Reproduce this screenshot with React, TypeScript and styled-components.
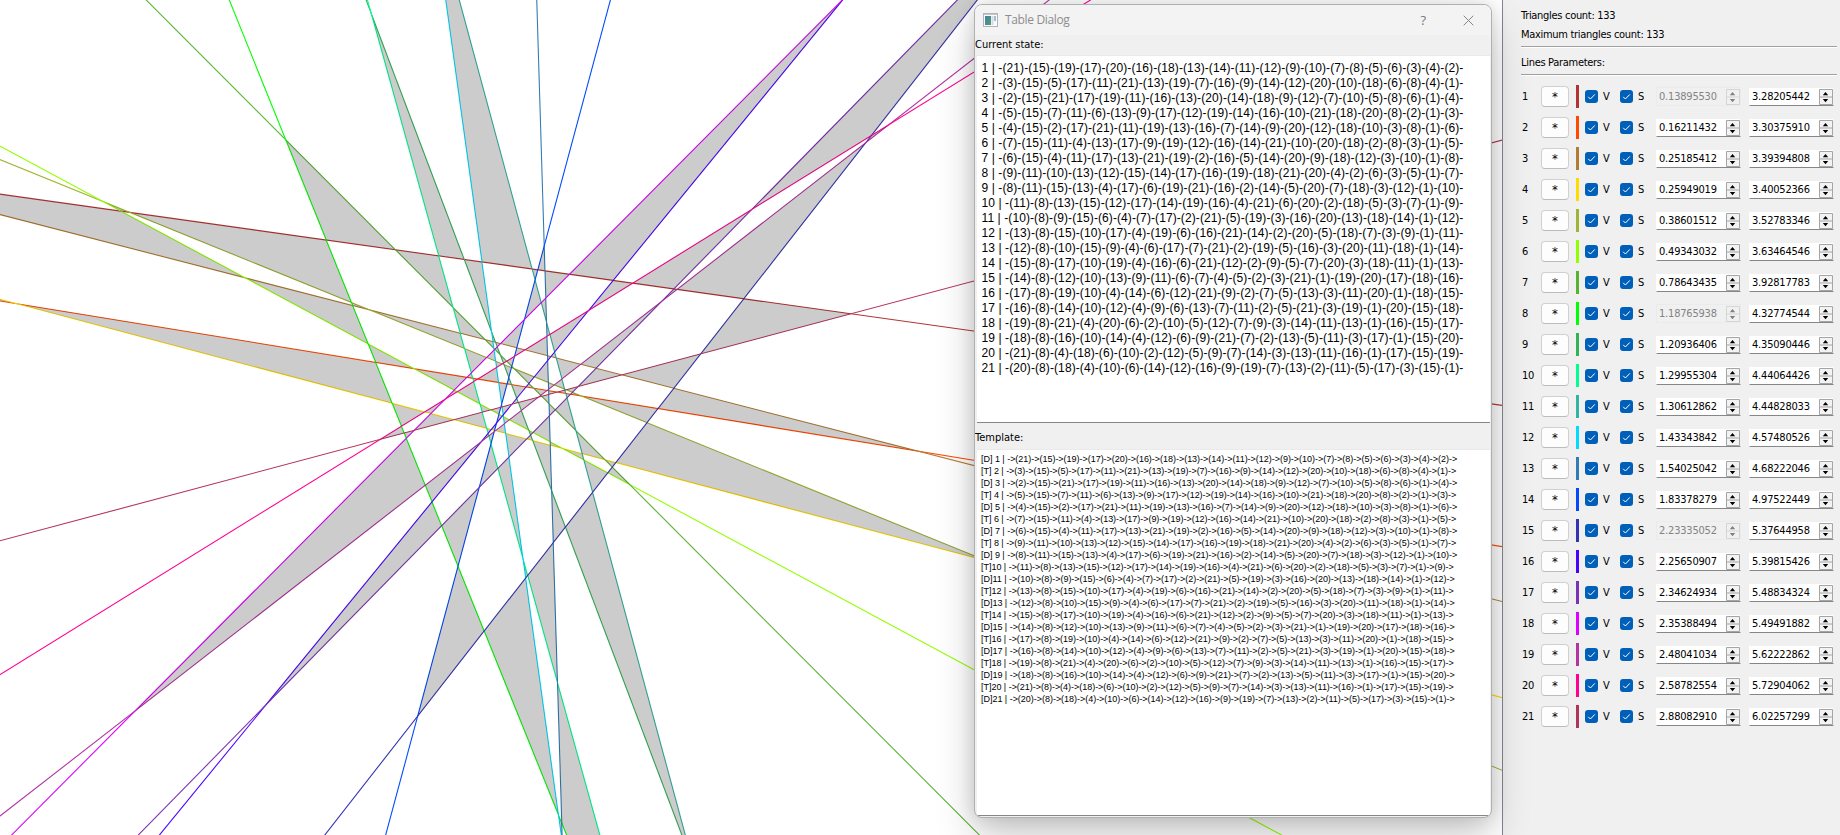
import React from 'react';
import styled, { createGlobalStyle } from 'styled-components';

/* ---------- data ---------- */

// Each line is a chord of a large circle, given by its two end angles.
const ANGLES: [string, string][] = [
  ['0.13895530', '3.28205442'],
  ['0.16211432', '3.30375910'],
  ['0.25185412', '3.39394808'],
  ['0.25949019', '3.40052366'],
  ['0.38601512', '3.52783346'],
  ['0.49343032', '3.63464546'],
  ['0.78643435', '3.92817783'],
  ['1.18765938', '4.32774544'],
  ['1.20936406', '4.35090446'],
  ['1.29955304', '4.44064426'],
  ['1.30612862', '4.44828033'],
  ['1.43343842', '4.57480526'],
  ['1.54025042', '4.68222046'],
  ['1.83378279', '4.97522449'],
  ['2.23335052', '5.37644958'],
  ['2.25650907', '5.39815426'],
  ['2.34624934', '5.48834324'],
  ['2.35388494', '5.49491882'],
  ['2.48041034', '5.62222862'],
  ['2.58782554', '5.72904062'],
  ['2.88082910', '6.02257299'],
];

const LOCKED = [1, 8, 15];

const ORDERS: number[][] = [
  [21, 15, 19, 17, 20, 16, 18, 13, 14, 11, 12, 9, 10, 7, 8, 5, 6, 3, 4, 2],
  [3, 15, 5, 17, 11, 21, 13, 19, 7, 16, 9, 14, 12, 20, 10, 18, 6, 8, 4, 1],
  [2, 15, 21, 17, 19, 11, 16, 13, 20, 14, 18, 9, 12, 7, 10, 5, 8, 6, 1, 4],
  [5, 15, 7, 11, 6, 13, 9, 17, 12, 19, 14, 16, 10, 21, 18, 20, 8, 2, 1, 3],
  [4, 15, 2, 17, 21, 11, 19, 13, 16, 7, 14, 9, 20, 12, 18, 10, 3, 8, 1, 6],
  [7, 15, 11, 4, 13, 17, 9, 19, 12, 16, 14, 21, 10, 20, 18, 2, 8, 3, 1, 5],
  [6, 15, 4, 11, 17, 13, 21, 19, 2, 16, 5, 14, 20, 9, 18, 12, 3, 10, 1, 8],
  [9, 11, 10, 13, 12, 15, 14, 17, 16, 19, 18, 21, 20, 4, 2, 6, 3, 5, 1, 7],
  [8, 11, 15, 13, 4, 17, 6, 19, 21, 16, 2, 14, 5, 20, 7, 18, 3, 12, 1, 10],
  [11, 8, 13, 15, 12, 17, 14, 19, 16, 4, 21, 6, 20, 2, 18, 5, 3, 7, 1, 9],
  [10, 8, 9, 15, 6, 4, 7, 17, 2, 21, 5, 19, 3, 16, 20, 13, 18, 14, 1, 12],
  [13, 8, 15, 10, 17, 4, 19, 6, 16, 21, 14, 2, 20, 5, 18, 7, 3, 9, 1, 11],
  [12, 8, 10, 15, 9, 4, 6, 17, 7, 21, 2, 19, 5, 16, 3, 20, 11, 18, 1, 14],
  [15, 8, 17, 10, 19, 4, 16, 6, 21, 12, 2, 9, 5, 7, 20, 3, 18, 11, 1, 13],
  [14, 8, 12, 10, 13, 9, 11, 6, 7, 4, 5, 2, 3, 21, 1, 19, 20, 17, 18, 16],
  [17, 8, 19, 10, 4, 14, 6, 12, 21, 9, 2, 7, 5, 13, 3, 11, 20, 1, 18, 15],
  [16, 8, 14, 10, 12, 4, 9, 6, 13, 7, 11, 2, 5, 21, 3, 19, 1, 20, 15, 18],
  [19, 8, 21, 4, 20, 6, 2, 10, 5, 12, 7, 9, 3, 14, 11, 13, 1, 16, 15, 17],
  [18, 8, 16, 10, 14, 4, 12, 6, 9, 21, 7, 2, 13, 5, 11, 3, 17, 1, 15, 20],
  [21, 8, 4, 18, 6, 10, 2, 12, 5, 9, 7, 14, 3, 13, 11, 16, 1, 17, 15, 19],
  [20, 8, 18, 4, 10, 6, 14, 12, 16, 9, 19, 7, 13, 2, 11, 5, 17, 3, 15, 1],
];

const lineColor = (i: number) =>
  i % 2 === 0
    ? `hsl(${(i * 360) / 21}, 55.6%, 45.1%)`
    : `hsl(${(i * 360) / 21}, 100%, 50%)`;

/* ---------- geometry ---------- */

const CX = 518.09;
const CY = 389.95;
const RADIUS = 161610.5;

const lines = ANGLES.map(([a, b]) => {
  const mid = (Number(a) + Number(b)) / 2;
  const half = (Number(b) - Number(a)) / 2;
  const nx = Math.cos(mid);
  const ny = Math.sin(mid);
  return { nx, ny, d: nx * CX + ny * CY + RADIUS * Math.cos(half) };
});

const meet = (i: number, j: number): [number, number] => {
  const p = lines[i];
  const q = lines[j];
  const det = p.nx * q.ny - p.ny * q.nx;
  return [(p.d * q.ny - q.d * p.ny) / det, (p.nx * q.d - q.nx * p.d) / det];
};

// Crossings of every line, ordered along the line.
const along = lines.map((l, i) =>
  lines
    .map((_, j) => j)
    .filter((j) => j !== i)
    .map((j) => {
      const [x, y] = meet(i, j);
      return { j, t: -l.ny * x + l.nx * y };
    })
    .sort((a, b) => a.t - b.t)
    .map((e) => e.j),
);

const adjacent = (i: number, j: number, k: number) =>
  Math.abs(along[i].indexOf(j) - along[i].indexOf(k)) === 1;

const triangles: string[] = [];
for (let i = 0; i < 21; i++)
  for (let j = i + 1; j < 21; j++)
    for (let k = j + 1; k < 21; k++)
      if (adjacent(i, j, k) && adjacent(j, i, k) && adjacent(k, i, j))
        triangles.push(
          [meet(i, j), meet(j, k), meet(i, k)]
            .map(([x, y]) => `${x.toFixed(2)},${y.toFixed(2)}`)
            .join(' '),
        );

const segments = lines.map((l) => {
  const x0 = l.nx * l.d;
  const y0 = l.ny * l.d;
  const reach = 3000;
  return {
    x1: x0 - l.ny * reach,
    y1: y0 + l.nx * reach,
    x2: x0 + l.ny * reach,
    y2: y0 - l.nx * reach,
  };
});

/* ---------- styles ---------- */

const Global = createGlobalStyle`
  html, body { margin: 0; background: #fff; }
  body { overflow: hidden; }
  * { box-sizing: border-box; }
`;

const Window = styled.div`
  position: relative;
  display: flex;
  width: 1840px;
  height: 835px;
  overflow: hidden;
  font: 11px/16px 'DejaVu Sans Condensed', 'DejaVu Sans', sans-serif;
  font-stretch: condensed;
  color: #000;
`;

const Canvas = styled.svg`
  flex: none;
  width: 1502px;
  height: 835px;
  background: #fff;
`;

const Panel = styled.aside`
  flex: 1;
  display: flex;
  flex-direction: column;
  padding: 6px 3px 0 18px;
  background: #f0f0f0;
  border-left: 1px solid #828790;
  letter-spacing: -0.3px;
`;

const PanelText = styled.div<{ $gap?: number }>`
  height: 19px;
  line-height: 19px;
  margin-top: ${(p) => p.$gap ?? 0}px;
`;

const Rule = styled.div<{ $gap: number }>`
  height: 2px;
  margin-top: ${(p) => p.$gap}px;
  background: #a0a0a0;
  border-bottom: 1px solid #fff;
`;

const Rows = styled.div`
  margin-top: 5px;
`;

const Row = styled.div`
  display: flex;
  align-items: center;
  height: 31px;

  > * {
    flex: none;
  }
`;

const RowNumber = styled.span`
  width: 20px;
  padding-left: 1px;
  white-space: nowrap;
  letter-spacing: -0.3px;
`;

const StarButton = styled.button`
  width: 28px;
  height: 21px;
  padding: 0;
  border: 1px solid #d0d0d0;
  border-bottom-color: #bcbcbc;
  border-radius: 4px;
  background: #fdfdfd;
  font: inherit;
  font-size: 13px;
  line-height: 18px;
  color: #000;
`;

const Swatch = styled.span<{ $color: string }>`
  width: 3px;
  height: 23px;
  margin: 0 6px 0 7px;
  background: ${(p) => p.$color};
`;

const Check = styled.label<{ $width: number }>`
  display: flex;
  align-items: center;
  gap: 5px;
  width: ${(p) => p.$width}px;
`;

const Box = styled.svg`
  width: 13px;
  height: 13px;
  border-radius: 3px;
  background: #005fb8;
`;

const Spin = styled.div<{ $off?: boolean }>`
  display: flex;
  align-items: center;
  justify-content: space-between;
  width: 85px;
  height: 19px;
  margin-right: 8px;
  padding: 0 0 0 2px;
  background: ${(p) => (p.$off ? '#f0f0f0' : '#fff')};
  border: 1px solid ${(p) => (p.$off ? '#ebebeb' : '#f0f0f0')};
  border-left-color: ${(p) => (p.$off ? '#ebebeb' : '#fff')};
  border-bottom-color: ${(p) => (p.$off ? '#ebebeb' : '#868686')};
  color: ${(p) => (p.$off ? '#838383' : '#000')};
  letter-spacing: -0.2px;

  &:last-child {
    margin-right: 0;
  }
`;

const Dialog = styled.section`
  position: absolute;
  left: 974px;
  top: 4px;
  width: 518px;
  height: 814px;
  display: flex;
  flex-direction: column;
  background: #f0f0f0;
  border: 1px solid #b0b0b0;
  border-radius: 8px;
  box-shadow:
    0 20px 40px rgba(0, 0, 0, 0.2),
    0 0 18px rgba(0, 0, 0, 0.14);
  overflow: hidden;
`;

const TitleBar = styled.header`
  display: flex;
  align-items: center;
  height: 30px;
  padding: 0 17px 0 8px;
  background: #f3f3f3;
  color: #8d8d8d;
  font: 12px/16px 'Open Sans', sans-serif;
`;

const Title = styled.span`
  flex: 1;
  margin-left: 7px;
  letter-spacing: -0.35px;
`;

const Help = styled.span`
  margin-right: 37px;
  font-size: 13px;
  color: #777;
`;

const Caption = styled.div<{ $height: number }>`
  flex: none;
  height: ${(p) => p.$height}px;
  padding: 2px 0 0;
`;

const TextView = styled.div<{ $height: number; $small?: boolean }>`
  flex: none;
  height: ${(p) => p.$height}px;
  margin: 0 1px 0 2px;
  padding: ${(p) => (p.$small ? '3px 4px 0' : '5px 4.5px 0')};
  background: #fff;
  border-top: 1px solid #e9e9e9;
  border-bottom: 1px solid #868686;
  font-family: 'Liberation Sans', Arial, sans-serif;
  font-size: ${(p) => (p.$small ? 9 : 12)}px;
  line-height: ${(p) => (p.$small ? 12 : 15)}px;
  letter-spacing: ${(p) => (p.$small ? -0.024 : 0.093)}px;
  white-space: pre;
`;

/* ---------- parts ---------- */

const CheckBox = ({ label, width }: { label: string; width: number }) => (
  <Check $width={width}>
    <Box viewBox="0 0 13 13">
      <path d="M3.2 6.8 5.4 9 9.8 4.4" fill="none" stroke="#fff" strokeWidth="1" />
    </Box>
    {label}
  </Check>
);

const SpinBox = ({ value, off }: { value: string; off?: boolean }) => (
  <Spin $off={off}>
    {value}
    <svg width="14" height="16" viewBox="0 0 14 16">
      <path
        d="M.5 .5H13.5V15.5H.5ZM.5 8H13.5"
        fill={off ? '#f0f0f0' : '#f3f3f3'}
        stroke={off ? '#d5d5d5' : '#a5a5a5'}
      />
      <path d="M3.8 6.2 6.5 3 9.2 6.2ZM3.8 10 6.5 13.2 9.2 10Z" fill={off ? '#808080' : '#000'} />
    </svg>
  </Spin>
);

const AppIcon = () => (
  <svg width="15" height="14" viewBox="0 0 15 14">
    <defs>
      <linearGradient id="pane" x1="0" y1="0" x2="1" y2="1">
        <stop offset="0" stopColor="#4a7f9c" />
        <stop offset="1" stopColor="#4f9e78" />
      </linearGradient>
    </defs>
    <rect x=".5" y=".5" width="14" height="13" fill="#fafafa" stroke="#aeb4ba" />
    <path d="M1 1.5H14" stroke="#c3c9cf" />
    <rect x="2" y="3" width="6" height="9" fill="url(#pane)" />
    <rect x="8.5" y="3" width="2" height="9" fill="#d5dade" />
    <rect x="11" y="3" width="2" height="5" fill="#9fc0d3" />
  </svg>
);

export default function App() {
  return (
    <Window>
      <Global />
      <Canvas viewBox="0 0 1502 835">
        {segments.map((s, i) => (
          <line key={i} {...s} stroke={lineColor(i)} strokeWidth={1.08} />
        ))}
        {triangles.map((t) => (
          <polygon key={t} points={t} fill="#000" fillOpacity={0.2} />
        ))}
      </Canvas>

      <Panel>
        <PanelText>Triangles count: {triangles.length}</PanelText>
        <PanelText>Maximum triangles count: 133</PanelText>
        <Rule $gap={2} />
        <PanelText $gap={5}>Lines Parameters:</PanelText>
        <Rule $gap={2} />
        <Rows>
          {ANGLES.map(([a, b], i) => (
            <Row key={a}>
              <RowNumber>{i + 1}</RowNumber>
              <StarButton>*</StarButton>
              <Swatch $color={lineColor(i)} />
              <CheckBox label="V" width={35} />
              <CheckBox label="S" width={36} />
              <SpinBox value={a} off={LOCKED.includes(i + 1)} />
              <SpinBox value={b} />
            </Row>
          ))}
        </Rows>
      </Panel>

      <Dialog>
        <TitleBar>
          <AppIcon />
          <Title>Table Dialog</Title>
          <Help>?</Help>
          <svg width="11" height="11" viewBox="0 0 11 11">
            <path d="M.7 .7 10.3 10.3M10.3 .7 .7 10.3" stroke="#858585" fill="none" />
          </svg>
        </TitleBar>
        <Caption $height={20}>Current state:</Caption>
        <TextView $height={368}>
          {ORDERS.map((row, i) => (
            <div key={i}>{`${i + 1} | -${row.map((n) => `(${n})-`).join('')}`}</div>
          ))}
        </TextView>
        <Caption $height={26}>
          <PanelText $gap={3}>Template:</PanelText>
        </Caption>
        <TextView $height={367} $small>
          {ORDERS.map((row, i) => (
            <div key={i}>
              {`[${i % 2 ? 'T' : 'D'}]${i < 9 ? ' ' : ''}${i + 1} | ->${row
                .map((n) => `(${n})->`)
                .join('')}`}
            </div>
          ))}
        </TextView>
      </Dialog>
    </Window>
  );
}
